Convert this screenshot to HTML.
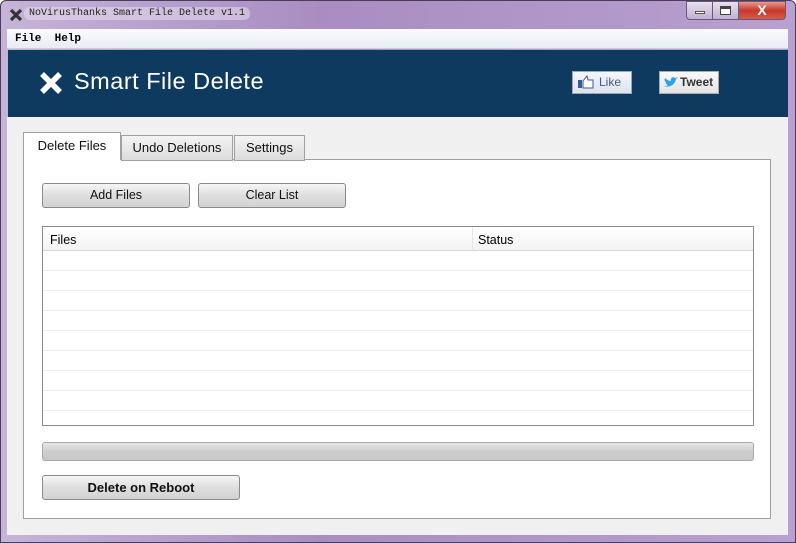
<!DOCTYPE html><html><head><style>
*{margin:0;padding:0;box-sizing:border-box}
body{width:796px;height:543px;overflow:hidden;background:#fff;font-family:"Liberation Sans",sans-serif;position:relative}
.frame{position:absolute;left:0;top:0;width:796px;height:543px;background:linear-gradient(90deg,#c6b4d8,#a98dc2 40%,#b8a0d0);border:1px solid #4a3d5a;border-radius:6px 6px 0 0}
.abs{position:absolute}
.title{left:24px;top:7px;font-family:"Liberation Mono",monospace;font-size:10px;color:#222;background:rgba(235,225,240,.5);padding:1px 5px;border-radius:6px}
.menu{left:7px;top:29px;width:781px;height:20px;background:linear-gradient(#fafbfd,#e8ecf4);border-bottom:1px solid #c9cfd9;font-family:"Liberation Mono",monospace;font-size:11px;font-weight:bold;padding:4px 8px}
.banner{left:8px;top:50px;width:780px;height:67px;background:#0f3a60}
.content{left:7px;top:117px;width:781px;height:418px;background:#f0f0f0}
.panel{left:23px;top:159px;width:748px;height:360px;background:#fff;border:1px solid #a0a0a0}
.tab{height:26px;border:1px solid #a0a0a0;background:linear-gradient(#f4f4f4,#dcdcdc);font-size:13px;text-align:center;line-height:24px;color:#111}
.btn{border:1px solid #8a8a8a;border-radius:3px;background:linear-gradient(#f6f6f6,#dedede 50%,#d2d2d2);font-size:12.5px;text-align:center;line-height:23px;color:#111}
.wb{top:1px;height:19px;border:1px solid #6a5a7a;background:linear-gradient(#e8e0f0,#c0b0d0)}
</style></head><body>
<div class="frame"></div>
<svg class="abs" style="left:9px;top:8px" width="14" height="14"><path d="M2 2L12 12M12 2L2 12" stroke="#333" stroke-width="3.2"/></svg>
<div class="abs title">NoVirusThanks Smart File Delete v1.1</div>
<div class="abs wb" style="left:686px;width:27px;border-radius:0 0 0 4px"><div style="margin:9px auto 0;width:10px;height:3px;background:#fff;border:1px solid #555"></div></div>
<div class="abs wb" style="left:712px;width:27px"><div style="margin:4px auto 0;width:11px;height:9px;border:1px solid #444;border-top-width:3px;background:#fff"></div></div>
<div class="abs wb" style="left:738px;width:48px;background:linear-gradient(#e89a90,#c8382a 50%,#d85a48);border-radius:0 0 4px 0;color:#fff;font-weight:bold;text-align:center;line-height:17px;font-size:14px">X</div>
<div class="abs menu">File&nbsp; Help</div>
<div class="abs banner"></div>
<svg class="abs" style="left:39px;top:71px" width="24" height="24"><path d="M3 3L21 21M21 3L3 21" stroke="#fff" stroke-width="5.5"/></svg>
<div class="abs" style="left:74px;top:68px;color:#fff;font-size:23.5px;letter-spacing:.5px">Smart File Delete</div>
<div class="abs" style="left:572px;top:71px;width:60px;height:23px;background:linear-gradient(#f4f6fa,#dfe3ec);border:1px solid #9aa6bc;font-size:12px;color:#3b5998;line-height:21px;padding-left:26px">Like</div>
<svg class="abs" style="left:578px;top:75px" width="16" height="14"><rect x="0" y="5" width="4" height="8" fill="#3b5998"/><path d="M5 6L9 1L10 5H15V13H5Z" fill="#fff" stroke="#3b5998"/></svg>
<div class="abs" style="left:659px;top:71px;width:60px;height:23px;background:linear-gradient(#fafafa,#e4e4e4);border:1px solid #aaa;font-size:12px;font-weight:bold;color:#333;line-height:21px;padding-left:20px">Tweet</div>
<svg class="abs" style="left:664px;top:77px" width="14" height="11"><path d="M0 9C5 11 11 8 12 2L14 0L11 1C9 -1 6 1 7 4C4 4 2 2 1 1C0 3 1 5 2 5C1 6 3 8 4 8C3 9 1 9 0 9Z" fill="#2aa3ef"/></svg>
<div class="abs content"></div>
<div class="abs panel"></div>
<div class="abs tab" style="left:23px;top:132px;width:98px;height:28px;background:#fff;border-bottom:none;line-height:26px">Delete Files</div>
<div class="abs tab" style="left:121px;top:135px;width:112px">Undo Deletions</div>
<div class="abs tab" style="left:234px;top:135px;width:71px">Settings</div>
<div class="abs btn" style="left:42px;top:183px;width:148px;height:25px">Add Files</div>
<div class="abs btn" style="left:198px;top:183px;width:148px;height:25px">Clear List</div>
<div class="abs" style="left:42px;top:226px;width:712px;height:200px;border:1px solid #8a8a8a;background:#fff;overflow:hidden">
<div style="height:24px;border-bottom:1px solid #d5d5d5;background:linear-gradient(#fff,#f3f3f3);font-size:12.5px;line-height:26px;position:relative"><span style="position:absolute;left:7px">Files</span><span style="position:absolute;left:435px">Status</span></div>
<div style="position:absolute;left:429px;top:0;width:1px;height:200px;background:#e6e6e6"></div>
<div style="position:absolute;left:0;top:24px;width:712px;height:176px;background:repeating-linear-gradient(#fff 0 19px,#ececec 19px 20px)"></div>
</div>
<div class="abs" style="left:42px;top:442px;width:712px;height:19px;border:1px solid #a8a8a8;border-radius:3px;background:linear-gradient(#e6e6e6,#cdcdcd 50%,#c8c8c8)"></div>
<div class="abs btn" style="left:42px;top:475px;width:198px;height:25px;font-weight:bold;font-size:13px">Delete on Reboot</div>
</body></html>
